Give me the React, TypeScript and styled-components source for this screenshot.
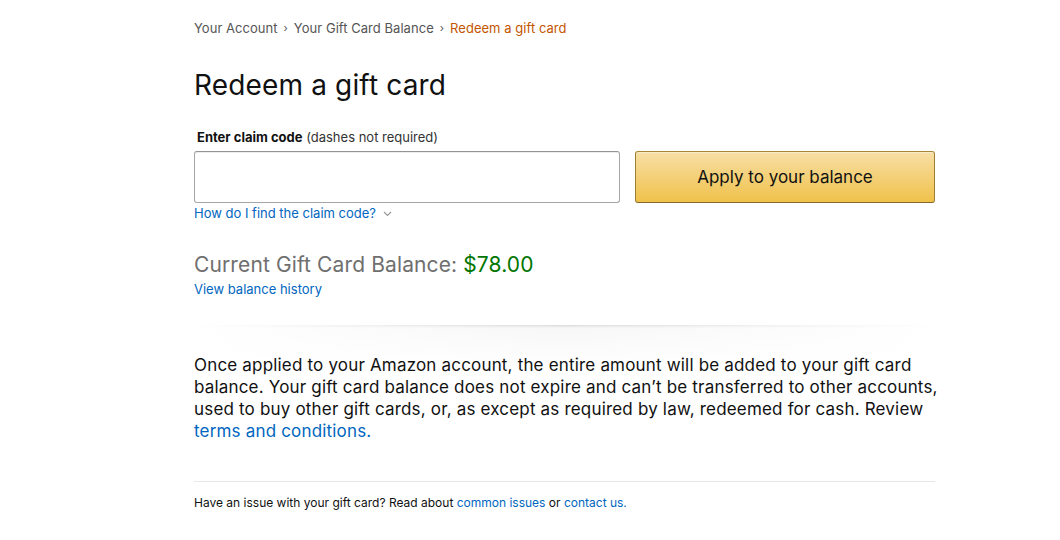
import React from "react";
import styled, { createGlobalStyle } from "styled-components";

const Global = createGlobalStyle`
  html, body { margin: 0; padding: 0; background: #fff; }
  body { font-family: Inter, "Liberation Sans", Arial, sans-serif; color: #111; }
  * { box-sizing: border-box; }
`;

const Page = styled.div`
  width: 1060px;
  padding: 19px 0 0 194px;
`;

const Column = styled.div`
  width: 741px;
  display: flex;
  flex-direction: column;
`;

const Breadcrumb = styled.nav`
  display: flex;
  align-items: center;
  gap: 6px;
  font-size: 13px;
  line-height: 19px;
  color: #555;
  letter-spacing: 0.04px;
`;

const Crumb = styled.span<{ $active?: boolean }>`
  color: ${(p) => (p.$active ? "#c45500" : "#555")};
`;

const Sep = styled.span`
  color: #555;
  font-size: 11px;
`;

const Title = styled.h1`
  margin: 29px 0 0;
  font-size: 28px;
  line-height: 36px;
  font-weight: 400;
  letter-spacing: 0.15px;
  color: #111;
`;

const Label = styled.div`
  margin: 25px 0 0 3px;
  font-size: 13px;
  line-height: 19px;
  color: #111;
`;

const Strong = styled.b`
  font-weight: 700;
`;

const Muted = styled.span`
  color: #333;
`;

const Row = styled.div`
  display: flex;
  gap: 15px;
  margin-top: 4px;
`;

const Input = styled.input`
  width: 426px;
  height: 52px;
  border: 1px solid #a6a6a6;
  border-top-color: #949494;
  border-radius: 3px;
  box-shadow: 0 1px 0 rgba(255, 255, 255, 0.5), 0 1px 0 rgba(0, 0, 0, 0.07) inset;
  font-size: 17px;
  padding: 0 10px;
  outline: none;
`;

const Button = styled.button`
  width: 300px;
  height: 52px;
  border: 1px solid;
  border-color: #a88734 #9c7e31 #846a29;
  border-radius: 3px;
  background: linear-gradient(to bottom, #f7dfa5, #f0c14b);
  box-shadow: 0 1px 0 rgba(255, 255, 255, 0.4) inset;
  font-family: inherit;
  font-size: 17px;
  color: #111;
  cursor: pointer;
`;

const Link = styled.a`
  color: #0066c0;
  text-decoration: none;
`;

const HelpLink = styled.div`
  display: flex;
  align-items: center;
  gap: 7px;
  font-size: 13px;
  line-height: 19px;
  color: #0066c0;
  margin-top: 1px;
`;

const Balance = styled.div`
  margin-top: 28px;
  font-size: 21px;
  line-height: 28px;
  letter-spacing: 0.12px;
  color: #6f6f6f;
`;

const Amount = styled.span`
  color: #007600;
`;

const SubLink = styled.div`
  font-size: 13px;
  line-height: 19px;
  margin-top: 1px;
`;

const ShadowDivider = styled.div`
  position: relative;
  margin-top: 26px;
  height: 44px;
  background: linear-gradient(to bottom, rgba(0, 0, 0, 0.14), rgba(0, 0, 0, 0.03) 3px, transparent);
  &::after {
    content: "";
    position: absolute;
    inset: 0;
    background: linear-gradient(to right, #fff, rgba(255, 255, 255, 0), #fff);
  }
`;

const Paragraph = styled.p`
  position: relative;
  z-index: 1;
  margin: -15px -14px 0 0;
  font-size: 17px;
  line-height: 22px;
  letter-spacing: 0.18px;
  color: #111;
`;

const Rule = styled.hr`
  margin: 39px 0 0;
  border: 0;
  border-top: 1px solid #e7e7e7;
  height: 0;
`;

const Footer = styled.div`
  margin-top: 12px;
  font-size: 12px;
  line-height: 18px;
  color: #111;
`;

const Chevron = () => (
  <svg width="9" height="6" viewBox="0 0 9 6" aria-hidden>
    <path d="M1 1l3.5 3.5L8 1" fill="none" stroke="#999" strokeWidth="1.2" />
  </svg>
);

export default function App() {
  return (
    <>
      <Global />
      <Page>
        <Column>
          <Breadcrumb>
            <Crumb>Your Account</Crumb>
            <Sep>›</Sep>
            <Crumb>Your Gift Card Balance</Crumb>
            <Sep>›</Sep>
            <Crumb $active>Redeem a gift card</Crumb>
          </Breadcrumb>
          <Title>Redeem a gift card</Title>
          <Label>
            <Strong>Enter claim code</Strong> <Muted>(dashes not required)</Muted>
          </Label>
          <Row>
            <Input aria-label="claim code" />
            <Button>Apply to your balance</Button>
          </Row>
          <HelpLink>
            <span>How do I find the claim code?</span>
            <Chevron />
          </HelpLink>
          <Balance>
            Current Gift Card Balance: <Amount>$78.00</Amount>
          </Balance>
          <SubLink>
            <Link href="#">View balance history</Link>
          </SubLink>
          <ShadowDivider />
          <Paragraph>
            Once applied to your Amazon account, the entire amount will be added to your gift card
            balance. Your gift card balance does not expire and can’t be transferred to other accounts,
            used to buy other gift cards, or, as except as required by law, redeemed for cash. Review{" "}
            <Link href="#">terms and conditions.</Link>
          </Paragraph>
          <Rule />
          <Footer>
            Have an issue with your gift card? Read about <Link href="#">common issues</Link> or{" "}
            <Link href="#">contact us.</Link>
          </Footer>
        </Column>
      </Page>
    </>
  );
}
